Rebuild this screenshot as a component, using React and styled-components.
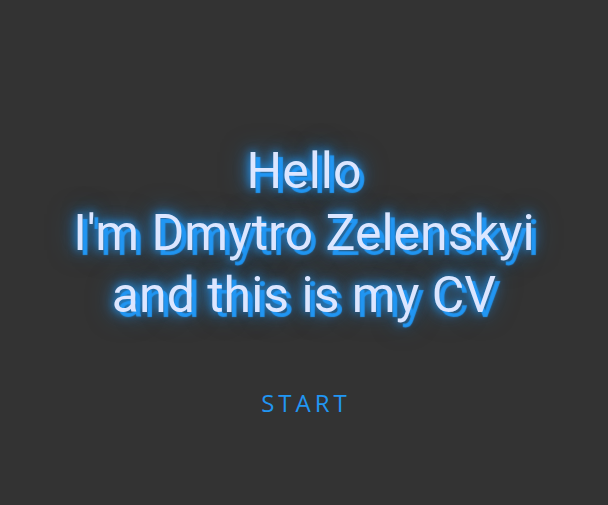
import React from 'react';
import styled, { createGlobalStyle } from 'styled-components';

const Global = createGlobalStyle`
  html, body {
    margin: 0;
    padding: 0;
    background: #333333;
  }
`;

const Page = styled.div`
  display: flex;
  flex-direction: column;
  align-items: center;
  height: 505px;
  padding-top: 140px;
  box-sizing: border-box;
  background: #333333;
`;

const Title = styled.h1`
  margin: 0;
  font-family: Roboto, "Liberation Sans", sans-serif;
  font-weight: 400;
  font-size: 50px;
  line-height: 62px;
  text-align: center;
  color: #dce6ff;
  text-shadow: 5px 5px 1px #2196f3, 0 0 8px #2196f3, 0 0 16px #2196f3,
    0 0 28px rgba(33, 150, 243, 0.5);
`;

const Start = styled.button`
  margin-top: 61px;
  padding: 0 0 0 4px;
  border: none;
  background: none;
  font-family: "Open Sans", "Noto Sans", sans-serif;
  font-size: 24px;
  line-height: 32px;
  letter-spacing: 4px;
  color: #2196f3;
  cursor: pointer;
`;

export default function App() {
  return (
    <>
      <Global />
      <Page>
        <Title>
          Hello
          <br />
          I'm Dmytro Zelenskyi
          <br />
          and this is my CV
        </Title>
        <Start>START</Start>
      </Page>
    </>
  );
}
